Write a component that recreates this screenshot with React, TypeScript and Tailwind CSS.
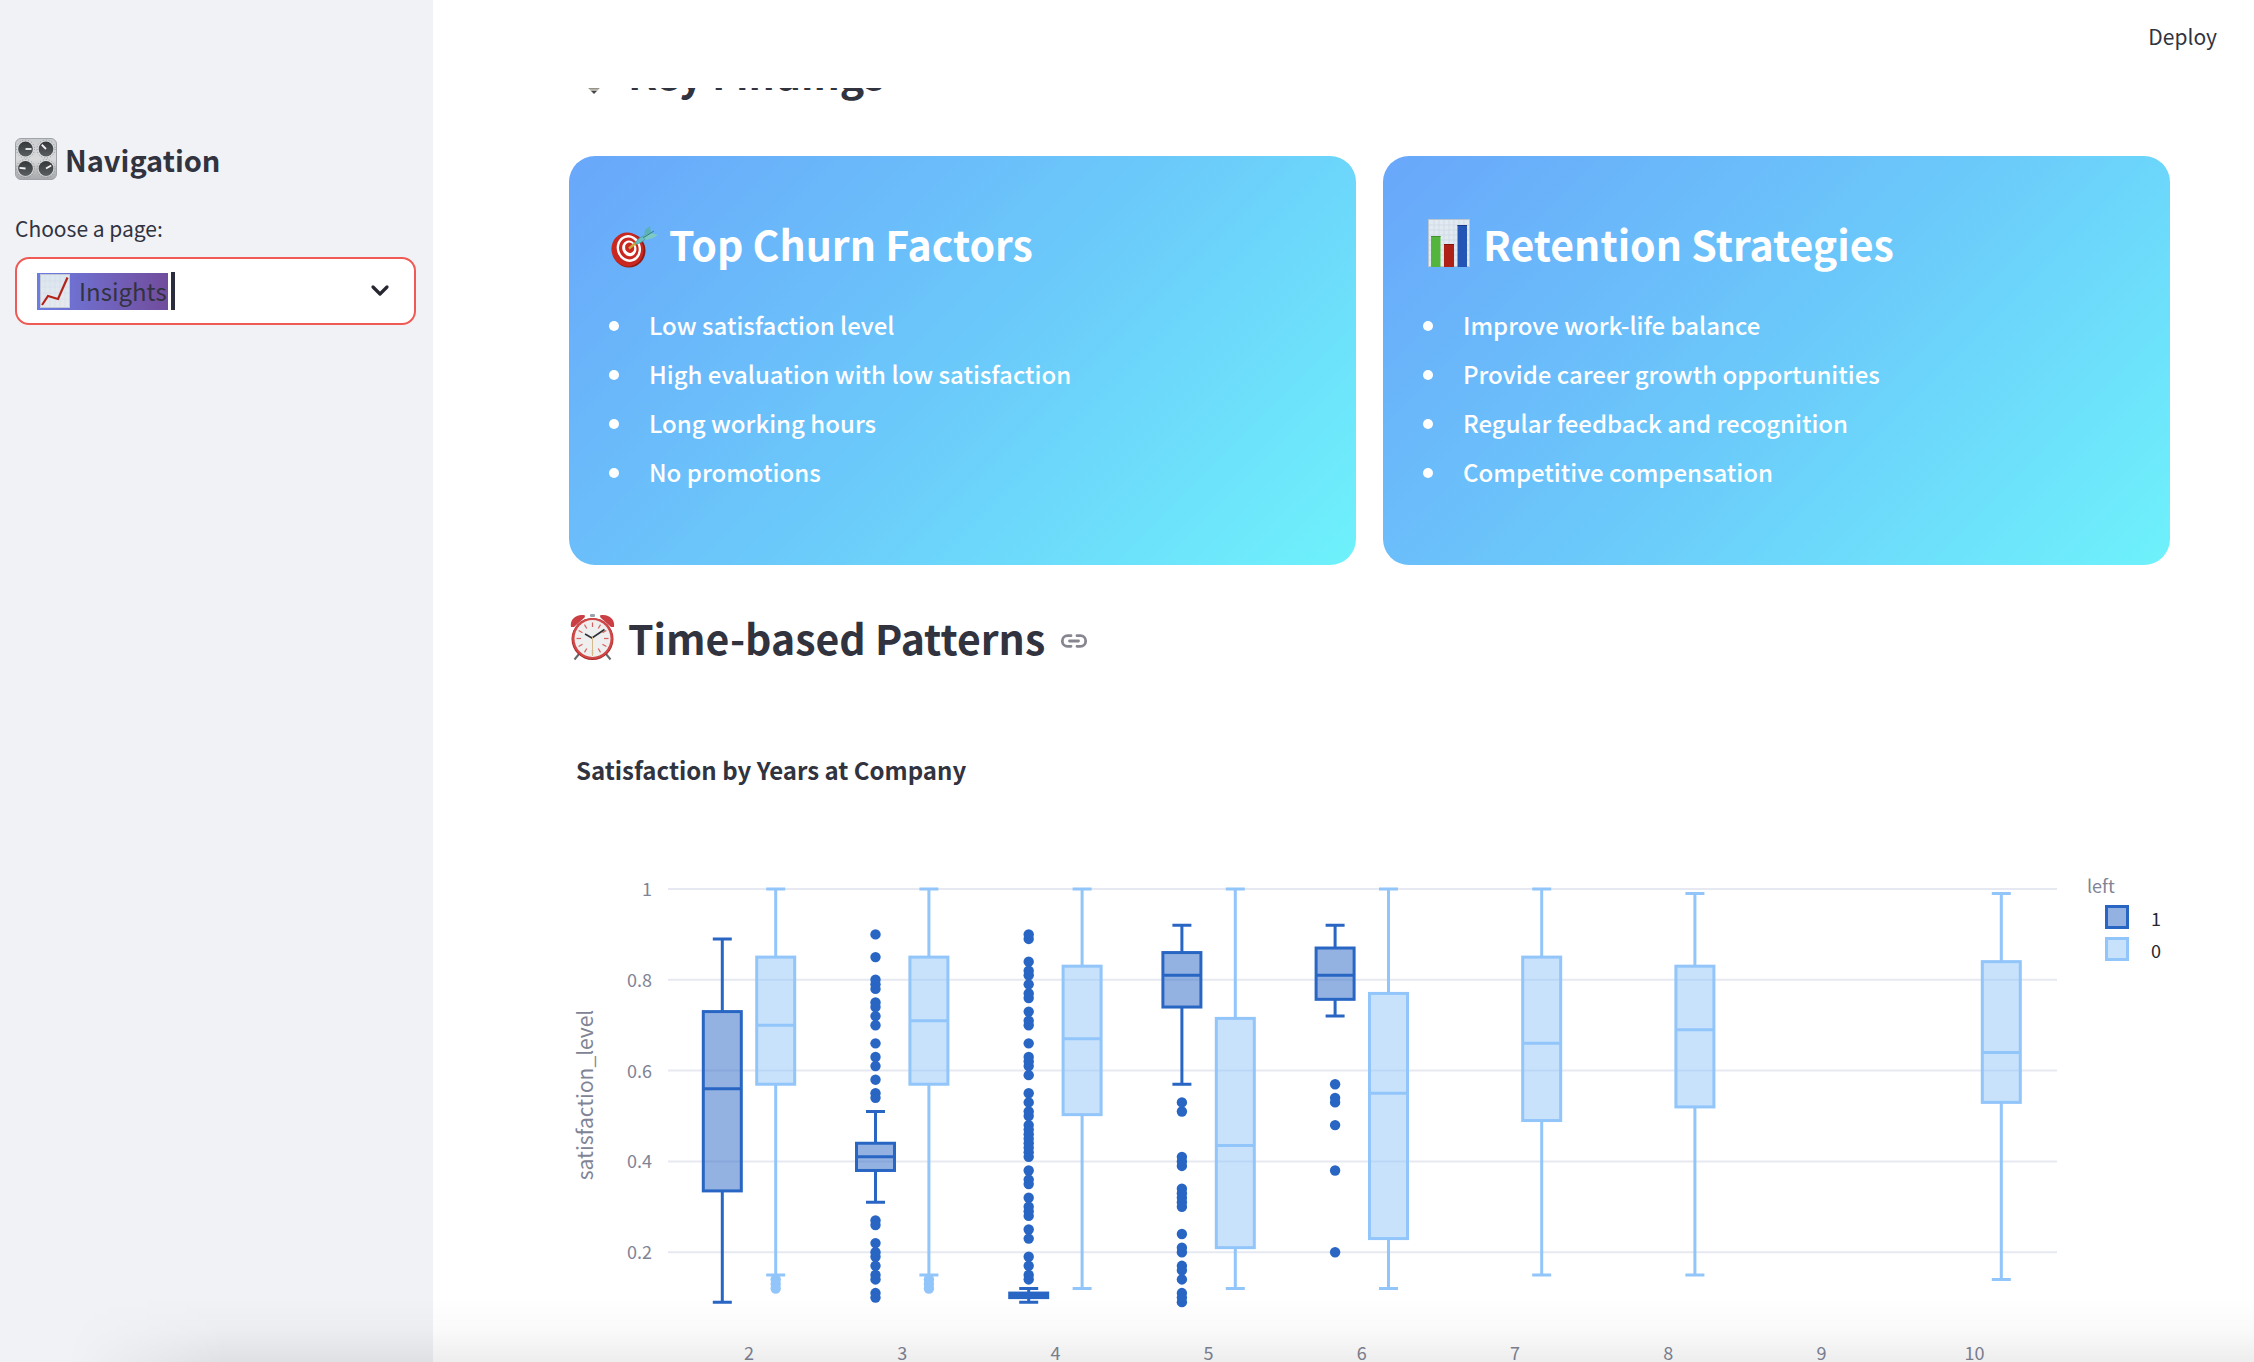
import React from 'react';

type Box = { year: number; hi: number; q3: number; med: number; q1: number; lo: number; points?: number[] };

const LEFT: Box[] = [
  { year: 2, hi: 0.89, q3: 0.73, med: 0.56, q1: 0.335, lo: 0.09 },
  {
    year: 3, hi: 0.51, q3: 0.44, med: 0.41, q1: 0.38, lo: 0.31,
    points: [0.9, 0.85, 0.8, 0.79, 0.78, 0.75, 0.74, 0.72, 0.7, 0.66, 0.63, 0.61, 0.58, 0.55, 0.54, 0.27, 0.26, 0.22, 0.2, 0.19, 0.17, 0.15, 0.14, 0.11, 0.1],
  },
  {
    year: 4, hi: 0.12, q3: 0.11, med: 0.105, q1: 0.1, lo: 0.09,
    points: [0.9, 0.89, 0.84, 0.82, 0.81, 0.79, 0.77, 0.76, 0.73, 0.71, 0.7, 0.66, 0.63, 0.62, 0.61, 0.59, 0.55, 0.53, 0.51, 0.5, 0.48, 0.47, 0.46, 0.45, 0.44, 0.43, 0.42, 0.41, 0.38, 0.36, 0.35, 0.32, 0.3, 0.29, 0.28, 0.25, 0.23, 0.19, 0.17, 0.15, 0.14],
  },
  {
    year: 5, hi: 0.92, q3: 0.86, med: 0.81, q1: 0.74, lo: 0.57,
    points: [0.53, 0.51, 0.41, 0.4, 0.39, 0.34, 0.33, 0.32, 0.31, 0.3, 0.24, 0.21, 0.2, 0.17, 0.16, 0.14, 0.11, 0.1, 0.09],
  },
  { year: 6, hi: 0.92, q3: 0.87, med: 0.81, q1: 0.757, lo: 0.72, points: [0.57, 0.54, 0.53, 0.48, 0.38, 0.2] },
];

const STAYED: Box[] = [
  { year: 2, hi: 1, q3: 0.85, med: 0.7, q1: 0.57, lo: 0.15, points: [0.14, 0.13, 0.12] },
  { year: 3, hi: 1, q3: 0.85, med: 0.71, q1: 0.57, lo: 0.15, points: [0.14, 0.13, 0.12] },
  { year: 4, hi: 1, q3: 0.83, med: 0.67, q1: 0.503, lo: 0.12 },
  { year: 5, hi: 1, q3: 0.715, med: 0.435, q1: 0.21, lo: 0.12 },
  { year: 6, hi: 1, q3: 0.77, med: 0.55, q1: 0.23, lo: 0.12 },
  { year: 7, hi: 1, q3: 0.85, med: 0.66, q1: 0.49, lo: 0.15 },
  { year: 8, hi: 0.99, q3: 0.83, med: 0.69, q1: 0.52, lo: 0.15 },
  { year: 10, hi: 0.99, q3: 0.84, med: 0.64, q1: 0.53, lo: 0.14 },
];

const xOf = (year: number) => 180 + (year - 2) * 153.2;
const yOf = (v: number) => 29 + (1 - v) * 454;

function BoxMark({ d, shift, color }: { d: Box; shift: number; color: string }) {
  const x = xOf(d.year) + shift;
  return (
    <g stroke={color} strokeWidth={3} fill="none">
      <path d={`M${x} ${yOf(d.hi)}V${yOf(d.q3)}M${x} ${yOf(d.q1)}V${yOf(d.lo)}`} />
      <path d={`M${x - 9.5} ${yOf(d.hi)}h19M${x - 9.5} ${yOf(d.lo)}h19`} />
      <rect x={x - 19} y={yOf(d.q3)} width={38} height={yOf(d.q1) - yOf(d.q3)} fill={color} fillOpacity={0.5} />
      <path d={`M${x - 19} ${yOf(d.med)}h38`} />
      {d.points?.map((p) => <circle key={p} cx={x} cy={yOf(p)} r={5.2} fill={color} stroke="none" />)}
    </g>
  );
}

function BoxChart() {
  return (
    <svg viewBox="0 0 1601 540" className="mt-[74px] block h-auto w-full" role="img" aria-label="Satisfaction by Years at Company">
      {[1, 0.8, 0.6, 0.4, 0.2].map((v) => (
        <g key={v}>
          <path d={`M99 ${yOf(v)}H1488`} stroke="#e6e9f1" strokeWidth={2} />
          <text x={83} y={yOf(v) + 7} textAnchor="end" fontSize={18} fill="#808495">{v}</text>
        </g>
      ))}
      {[2, 3, 4, 5, 6, 7, 8, 9, 10].map((y) => (
        <text key={y} x={xOf(y)} y={500} textAnchor="middle" fontSize={18} fill="#808495">{y}</text>
      ))}
      <text transform="translate(24 235) rotate(-90)" textAnchor="middle" fontSize={21} fill="#808495">satisfaction_level</text>
      {LEFT.map((d) => <BoxMark key={d.year} d={d} shift={-26.7} color="#2966c4" />)}
      {STAYED.map((d) => <BoxMark key={d.year} d={d} shift={26.7} color="#92c5fa" />)}
      <text x={1518} y={33} fontSize={18} fill="#808495">left</text>
      <rect x={1537.5} y={46.5} width={21} height={21} fill="#2966c4" fillOpacity={0.5} stroke="#2966c4" strokeWidth={3} />
      <rect x={1537.5} y={78.5} width={21} height={21} fill="#92c5fa" fillOpacity={0.5} stroke="#92c5fa" strokeWidth={3} />
      <text x={1582} y={66} fontSize={18} fill="#262730">1</text>
      <text x={1582} y={98} fontSize={18} fill="#262730">0</text>
    </svg>
  );
}

function Knobs() {
  const knobs: [number, number, number][] = [[10.5, 11, 0], [31, 11, -135], [10.5, 30.5, 185], [31, 30.5, -30]];
  return (
    <svg viewBox="0 0 42 42" className="size-[42px] shrink-0" aria-hidden="true">
      <defs>
        <linearGradient id="plate" x1="0" y1="0" x2="0" y2="1"><stop offset="0" stopColor="#c9ccce" /><stop offset=".5" stopColor="#d8d9da" /><stop offset="1" stopColor="#a6a8ab" /></linearGradient>
        <linearGradient id="knob" x1="0" y1="0" x2="0" y2="1"><stop offset="0" stopColor="#34383b" /><stop offset="1" stopColor="#5a5e61" /></linearGradient>
      </defs>
      <rect x=".5" y=".5" width="41" height="41" rx="5.5" fill="url(#plate)" stroke="#9fa2a8" />
      {knobs.map(([x, y, a]) => (
        <g key={`${x}-${y}`} transform={`translate(${x} ${y})`}>
          <circle r="9" fill="none" stroke="#85888b" strokeWidth="1" strokeDasharray=".8 2.2" />
          <circle r="8" fill="#e2e3e4" />
          <circle r="7.4" fill="url(#knob)" />
          <path d="M0 0H6" transform={`rotate(${a})`} stroke="#f4f4f4" strokeWidth="1.8" />
        </g>
      ))}
    </svg>
  );
}

function TrendChart() {
  return (
    <svg viewBox="0 0 30 34" className="h-[34px] w-[30px] shrink-0" aria-hidden="true">
      <defs><linearGradient id="paper" x1="0" y1="0" x2="0" y2="1"><stop offset="0" stopColor="#dbe6f0" /><stop offset="1" stopColor="#e6e9ee" /></linearGradient></defs>
      <rect x=".5" y=".5" width="29" height="33" fill="url(#paper)" stroke="#c3c9d3" />
      <path d="M5 1V33M10 1V33M15 1V33M20 1V33M25 1V33M1 7H29M1 13H29M1 19H29M1 25H29" stroke="#d2dae4" strokeWidth=".5" />
      <path d="M2 31L8 22L18 25L27.500 3.500" fill="none" stroke="#b3231a" strokeWidth="2.200" />
    </svg>
  );
}

function Target() {
  return (
    <svg viewBox="-1 -7 48 48" className="size-12 shrink-0 overflow-visible" aria-hidden="true">
      <ellipse cx="19" cy="24.500" rx="16.500" ry="17" fill="#8e1c15" />
      <ellipse cx="17.500" cy="23.500" rx="16" ry="17" transform="rotate(-12 17.500 23.500)" fill="#c9271f" />
      <g transform="rotate(-18 19 23)">
        <ellipse cx="19" cy="22.500" rx="12" ry="13.500" fill="#fff" />
        <ellipse cx="19" cy="22.500" rx="9.700" ry="11" fill="#c9271f" />
        <ellipse cx="19.500" cy="22.500" rx="7" ry="8" fill="#fff" />
        <ellipse cx="20" cy="22" rx="4.500" ry="5.200" fill="#c9271f" />
      </g>
      <path d="M19 22.500L27 16" stroke="#d0a83c" strokeWidth="2.500" />
      <path d="M25 17.500Q28 11 37 9Q36 15 27 18Z" fill="#69c0c2" stroke="#4a9ea3" strokeWidth=".8" />
      <path d="M34 11L35 4L40 0L41 7L38 11Z" fill="#5cb2b2" />
      <path d="M34 11L41 7L48 9L43 12L36 14Z" fill="#7cc9c6" />
      <path d="M33 12L44 5" stroke="#347f86" strokeWidth="1" />
    </svg>
  );
}

function BarIcon() {
  return (
    <svg viewBox="0 0 42 48" className="h-12 w-[42px] shrink-0" aria-hidden="true">
      <rect x=".5" y=".5" width="41" height="47" fill="#e1e9f1" stroke="#b9c5d1" />
      <path d="M6 1V47M11 1V47M16 1V47M21 1V47M26 1V47M31 1V47M36 1V47M1 6H41M1 11H41M1 16H41M1 21H41M1 26H41M1 31H41M1 36H41M1 41H41" stroke="#cbd7e2" strokeWidth=".6" />
      <rect x="3" y="17" width="9.500" height="31" fill="#54b53c" />
      <rect x="16" y="25" width="10" height="23" fill="#ae2117" />
      <rect x="29.500" y="6" width="9.500" height="42" fill="#2454b4" />
      <path d="M3 17.500H12.500" stroke="#3f8f2c" /><path d="M16 25.500H26" stroke="#7f150d" /><path d="M29.500 6.500H39" stroke="#163a86" />
    </svg>
  );
}

function AlarmClock() {
  return (
    <svg viewBox="-1 0 48 48" className="size-12 shrink-0" aria-hidden="true">
      <path d="M9 41L4.500 46.500M36 41L40.500 46.500" stroke="#66696c" strokeWidth="2" />
      <rect x="20" y="1" width="5" height="3" rx="1" fill="#9aa3ab" />
      <path d="M1 14C-.5 6 7 .5 15 2.500Q15.500 4 13 6L4 14Z" fill="#c93f43" />
      <path d="M44 14C45.500 6 38 .5 30 2.500Q29.500 4 32 6L41 14Z" fill="#c93f43" />
      <ellipse cx="22.500" cy="26" rx="21" ry="21" fill="#a92528" />
      <ellipse cx="22.500" cy="25.500" rx="20.500" ry="20.500" fill="#cf4747" />
      <ellipse cx="22.500" cy="25.500" rx="18" ry="18.500" fill="#eeefee" />
      <g stroke="#d8615f" strokeWidth="1.200">
        {[0, 1, 2, 3, 4, 5, 6, 7, 8, 9, 10, 11].map((n) => <path key={n} d="M22.500 9.500V14" transform={`rotate(${n * 30} 22.500 25.500)`} />)}
      </g>
      <path d="M15 21L22 25L34.500 16.500" fill="none" stroke="#303437" strokeWidth="1.600" />
      <path d="M22.500 24V43" stroke="#d6b98c" strokeWidth="1" />
    </svg>
  );
}

function Bulb() {
  return (
    <svg viewBox="0 0 48 48" className="size-12 shrink-0" aria-hidden="true">
      <circle cx="25" cy="15" r="15" fill="#f6dc78" />
      <path d="M19 30H31V40L28 43H22L19 40Z" fill="#b5b3aa" />
      <path d="M20 36H30M20 40H30" stroke="#8a8981" strokeWidth="1.500" />
      <path d="M22 43H28L25 46Z" fill="#45474a" />
    </svg>
  );
}

function Card({ icon, title, items }: { icon: React.ReactNode; title: string; items: string[] }) {
  return (
    <section className="rounded-[26px] bg-linear-135 from-[#69a7fa] via-[#6bc9fa] to-[#6ef2fb] px-10 pt-[63px] pb-[69px] text-white">
      <h3 className="flex h-12 items-center text-[41px] leading-[48px] font-bold whitespace-nowrap">
        <span className="flex w-[60px] shrink-0">{icon}</span>
        {title}
      </h3>
      <ul className="mt-[33px] text-[24px] leading-[49px] font-medium">
        {items.map((t) => (
          <li key={t} className="flex items-center gap-[30px] whitespace-nowrap before:mt-[2px] before:size-[10px] before:shrink-0 before:rounded-full before:bg-white">
            {t}
          </li>
        ))}
      </ul>
    </section>
  );
}

export default function App() {
  return (
    <div className="relative flex h-screen overflow-hidden bg-white font-['Noto_Sans_CJK_SC','Source_Sans_Pro',sans-serif] text-[#31333f]">
      <aside className="w-[433px] shrink-0 bg-[#f0f2f6] pt-[138px] pr-[17px] pl-[15px]">
        <h2 className="flex h-[42px] items-center gap-2 text-[29px] leading-[42px] font-bold">
          <Knobs />
          Navigation
        </h2>
        <label htmlFor="page" className="mt-8 block text-[21px] leading-8">Choose a page:</label>
        <div className="mt-[13px] flex h-[68px] items-center rounded-[14px] border-2 border-[#ef5a55] bg-white pr-[23px] pl-5">
          <div className="flex h-[37px] w-[131px] items-center gap-[9px] bg-linear-to-r from-[#6b7de4] to-[#714c9c] pl-[3px]">
            <TrendChart />
            <input id="page" role="combobox" aria-expanded="false" defaultValue="Insights" className="h-9 w-[89px] bg-transparent pb-[2px] text-[24px] leading-[34px] outline-none" />
          </div>
          <span className="ml-[3px] h-[38px] w-1 bg-[#2b2d3e]" />
          <button type="button" aria-label="Open page list" className="ml-auto">
            <svg viewBox="0 0 22 14" className="block h-[14px] w-[22px]"><path d="M4 3L11 10L18 3" fill="none" stroke="#262730" strokeWidth="3.200" strokeLinecap="round" strokeLinejoin="round" /></svg>
          </button>
        </div>
      </aside>

      <div className="flex min-w-0 flex-1 flex-col">
        <header className="flex h-[88px] shrink-0 items-center justify-end pr-[37px] pb-[17px]">
          <button type="button" className="text-[21px] leading-8">Deploy</button>
        </header>
        <main className="min-h-0 flex-1 overflow-hidden pr-[84px] pl-[136px]">
          <h2 className="-mt-[38px] flex h-11 items-center gap-[11px] text-[41px] leading-[44px] font-bold">
            <Bulb />
            Key Findings
          </h2>
          <div className="mt-[62px] grid grid-cols-2 gap-[27px]">
            <Card icon={<Target />} title="Top Churn Factors" items={['Low satisfaction level', 'High evaluation with low satisfaction', 'Long working hours', 'No promotions']} />
            <Card icon={<span className="pl-[5px]"><BarIcon /></span>} title="Retention Strategies" items={['Improve work-life balance', 'Provide career growth opportunities', 'Regular feedback and recognition', 'Competitive compensation']} />
          </div>
          <h2 className="mt-12 flex h-12 items-center gap-[11px] text-[41px] leading-[48px] font-bold">
            <AlarmClock />
            Time-based Patterns
            <a href="#time-based-patterns" aria-label="Link to Time-based Patterns" className="mt-2 ml-1">
              <svg viewBox="1 0 28 16" className="block h-4 w-7" fill="none" stroke="#85868f" strokeWidth="2.800" strokeLinecap="round">
                <path d="M12 2.700H8.600A5.300 5.300 0 0 0 8.600 13.300H12M18 2.700H21.400A5.300 5.300 0 0 1 21.400 13.300H18M10.500 8H19.500" />
              </svg>
            </a>
          </h2>
          <h3 className="mt-[93px] pl-[7px] text-[24px] leading-8 font-bold">Satisfaction by Years at Company</h3>
          <BoxChart />
        </main>
      </div>

      <div className="pointer-events-none absolute inset-x-0 bottom-0 h-16 bg-linear-to-t from-black/7 via-black/2 to-transparent mask-l-from-90% mask-l-to-97%" />
    </div>
  );
}
